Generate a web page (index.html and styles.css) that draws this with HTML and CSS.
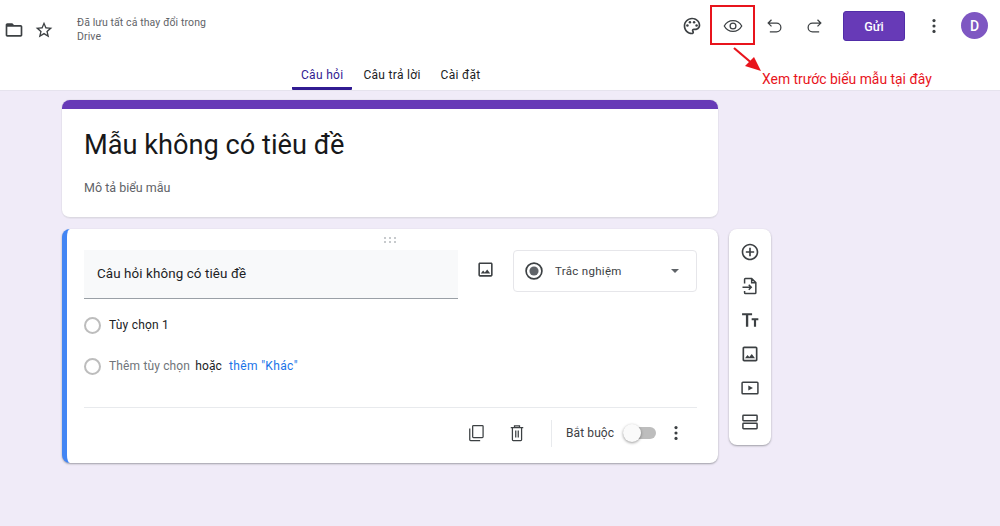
FILE: index.html
```html
<!DOCTYPE html>
<html lang="vi">
<head>
<meta charset="utf-8">
<title>Mẫu không có tiêu đề</title>
<link rel="stylesheet" href="styles.css">
</head>
<body>
<header class="header">
  <div class="topbar">
    <div class="top-left">
      <svg class="icon ic-folder" viewBox="0 0 24 24"><path d="M20 6h-8l-2-2H4c-1.1 0-1.99.9-1.99 2L2 18c0 1.1.9 2 2 2h16c1.1 0 2-.9 2-2V8c0-1.1-.9-2-2-2zm0 12H4V8h16v10z"/></svg>
      <svg class="icon ic-star" viewBox="0 0 24 24"><path d="M22 9.24l-7.19-.62L12 2 9.19 8.63 2 9.24l5.46 4.73L5.82 21 12 17.27 18.18 21l-1.63-7.03L22 9.24zM12 15.4l-3.76 2.27 1-4.28-3.32-2.88 4.38-.38L12 6.1l1.71 4.04 4.38.38-3.32 2.88 1 4.28L12 15.4z"/></svg>
      <div class="saved">Đã lưu tất cả thay đổi trong<br>Drive</div>
    </div>
    <div class="top-right">
      <span class="tool"><svg class="icon" viewBox="0 0 24 24"><path d="M12 22C6.49 22 2 17.51 2 12S6.49 2 12 2s10 4.04 10 9c0 3.31-2.69 6-6 6h-1.77c-.28 0-.5.22-.5.5 0 .12.05.23.13.33.41.47.64 1.06.64 1.67 0 1.38-1.12 2.5-2.5 2.5zm0-18c-4.41 0-8 3.59-8 8s3.59 8 8 8c.28 0 .5-.22.5-.5 0-.16-.08-.28-.14-.35-.41-.46-.63-1.05-.63-1.65 0-1.38 1.12-2.5 2.5-2.5H16c2.21 0 4-1.79 4-4 0-3.86-3.59-7-8-7z"/><circle cx="6.5" cy="11.5" r="1.5"/><circle cx="9.5" cy="7.5" r="1.5"/><circle cx="14.5" cy="7.5" r="1.5"/><circle cx="17.5" cy="11.5" r="1.5"/></svg></span>
      <span class="tool"><svg class="icon line thin" viewBox="0 0 24 24"><path d="M1.500 12C4 7.500 8 5.500 12 5.500s8 2 10.500 6.500c-2.500 4.500-6.500 6.500-10.500 6.500s-8-2-10.500-6.500z"/><circle cx="12" cy="12" r="3.500"/></svg></span>
      <span class="tool"><svg class="icon line thin" viewBox="0 0 24 24"><path d="M9 4.500l-4 4 4 4M5 8.500h10a5 5 0 0 1 0 10.500H7"/></svg></span>
      <span class="tool"><svg class="icon line thin" viewBox="0 0 24 24"><path d="M15 4.500l4 4-4 4M19 8.500H9a5 5 0 0 0 0 10.500h8"/></svg></span>
      <button class="send" type="button">Gửi</button>
      <span class="tool tool-more"><svg class="icon" viewBox="0 0 24 24"><circle cx="12" cy="5.500" r="1.900"/><circle cx="12" cy="12" r="1.900"/><circle cx="12" cy="18.500" r="1.900"/></svg></span>
      <span class="avatar">D</span>
    </div>
  </div>
  <nav class="tabs">
    <a class="tab tab-active">Câu hỏi</a>
    <a class="tab">Câu trả lời</a>
    <a class="tab">Cài đặt</a>
  </nav>
</header>

<main class="canvas">
  <div class="column">
    <section class="card title-card">
      <h1 class="form-title">Mẫu không có tiêu đề</h1>
      <p class="form-desc">Mô tả biểu mẫu</p>
    </section>
    <section class="card question-card">
      <div class="handle"><svg width="14" height="8" viewBox="0 0 14 8"><g fill="#b5b8bc"><circle cx="2" cy="2" r="1"/><circle cx="7" cy="2" r="1"/><circle cx="12" cy="2" r="1"/><circle cx="2" cy="6" r="1"/><circle cx="7" cy="6" r="1"/><circle cx="12" cy="6" r="1"/></g></svg></div>
      <div class="q-row">
        <div class="q-input">Câu hỏi không có tiêu đề</div>
        <svg class="icon ic-img" viewBox="0 0 24 24"><path d="M19 5v14H5V5h14m0-2H5c-1.100 0-2 .9-2 2v14c0 1.100.9 2 2 2h14c1.100 0 2-.9 2-2V5c0-1.100-.9-2-2-2zm-4.860 8.860l-3 3.870L9 13.140 6 17h12l-3.860-5.140z"/></svg>
        <div class="q-type">
          <svg class="ic-radio" viewBox="0 0 24 24"><circle cx="12" cy="12" r="9.500" fill="none" stroke="#3c4043" stroke-width="2"/><circle cx="12" cy="12" r="5.500" fill="#5f6368"/></svg>
          <span class="q-type-label">Trắc nghiệm</span>
          <span class="caret"></span>
        </div>
      </div>
      <div class="option option-first">
        <span class="radio"></span><span class="opt-text">Tùy chọn 1</span>
      </div>
      <div class="option">
        <span class="radio"></span><span class="opt-add">Thêm tùy chọn</span><span class="opt-or">hoặc</span><span class="opt-link">thêm "Khác"</span>
      </div>
      <div class="q-footer">
        <svg class="icon line thin ic-foot" viewBox="0 0 24 24"><rect x="8" y="3" width="12.500" height="14.500" rx="1"/><path d="M4.500 6.500V20a1 1 0 0 0 1 1H17"/></svg>
        <svg class="icon line thin ic-foot ic-trash" viewBox="0 0 24 24"><path d="M4.500 5.500h15M9 5.500V3.500h6v2M6.500 5.500V20a1 1 0 0 0 1 1h9a1 1 0 0 0 1-1V5.500M10.500 9v8.500M13.500 9v8.500"/></svg>
        <span class="v-divider"></span>
        <span class="required">Bắt buộc</span>
        <span class="toggle"><span class="knob"></span></span>
        <svg class="icon ic-more2" viewBox="0 0 24 24"><circle cx="12" cy="5.500" r="1.900"/><circle cx="12" cy="12" r="1.900"/><circle cx="12" cy="18.500" r="1.900"/></svg>
      </div>
    </section>
  </div>
  <aside class="card sidebar">
    <svg class="icon" viewBox="0 0 24 24"><path d="M13 7h-2v4H7v2h4v4h2v-4h4v-2h-4V7zm-1-5C6.480 2 2 6.480 2 12s4.480 10 10 10 10-4.480 10-10S17.520 2 12 2zm0 18c-4.410 0-8-3.590-8-8s3.590-8 8-8 8 3.590 8 8-3.590 8-8 8z"/></svg>
    <svg class="icon line" viewBox="0 0 24 24"><path d="M5.500 9V4a1 1 0 0 1 1-1H14l5 5v12a1 1 0 0 1-1 1H6.500a1 1 0 0 1-1-1v-2M14 3v5h5M3 13.500h10.500M10.500 10.500l3 3-3 3"/></svg>
    <svg class="icon" viewBox="0 0 24 24"><path d="M2.500 4h12v2.400H9.900V20H7.100V6.400H2.500zM14 10h8v2.200h-2.700V20h-2.600v-7.800H14z"/></svg>
    <svg class="icon" viewBox="0 0 24 24"><path d="M19 5v14H5V5h14m0-2H5c-1.100 0-2 .9-2 2v14c0 1.100.9 2 2 2h14c1.100 0 2-.9 2-2V5c0-1.100-.9-2-2-2zm-4.860 8.860l-3 3.870L9 13.140 6 17h12l-3.860-5.140z"/></svg>
    <svg class="icon line" viewBox="0 0 24 24"><rect x="2.500" y="5" width="19" height="14" rx="1"/><path class="solid" d="M10 9l5.500 3-5.500 3z"/></svg>
    <svg class="icon line" viewBox="0 0 24 24"><rect x="3.500" y="4" width="17" height="6.500" rx=".8"/><rect x="3.500" y="13.500" width="17" height="6.500" rx=".8"/></svg>
  </aside>
</main>

<div class="callout-box"></div>
<svg class="callout-arrow" width="50" height="34" viewBox="0 0 50 34"><path d="M2 1 L22 18" stroke="#e8141c" stroke-width="2.200" fill="none"/><path d="M29 24 L13 19 L22 10 Z" fill="#e8141c"/></svg>
<div class="callout-text">Xem trước biểu mẫu tại đây</div>
</body>
</html>
```
FILE: styles.css
```css
* { box-sizing: border-box; }
html, body { margin: 0; padding: 0; }
body {
  width: 1000px;
  height: 526px;
  overflow: hidden;
  background: #f0ebf8;
  font-family: Roboto, "Noto Sans", sans-serif;
  color: #202124;
  position: relative;
}
.icon { width: 20px; height: 20px; fill: #3c4043; flex: none; display: block; }
.icon.line { fill: none; stroke: #3c4043; stroke-width: 1.800; }
.icon.line.thin { stroke-width: 1.500; }
.icon.line .solid { fill: #3c4043; stroke: none; }

.header { height: 91px; background: #fff; border-bottom: 1px solid #e6e3ee; }
.topbar { height: 60px; display: flex; justify-content: space-between; }
.top-left { display: flex; align-items: center; padding: 0 0 0 4px; height: 60px; }
.ic-folder { width: 20px; height: 20px; }
.ic-star { width: 20px; height: 20px; margin-left: 10px; }
.saved {
  margin-left: 23px;
  font-size: 10.500px;
  line-height: 14px;
  letter-spacing: .1px;
  color: #5f6368;
}
.top-right { display: flex; align-items: flex-start; padding: 11px 12px 0 0; }
.tool { width: 41px; height: 30px; display: flex; align-items: center; justify-content: center; }
.tool-more { margin-left: 8px; width: 41px; }
.send {
  margin-left: 8px;
  width: 62px;
  height: 30px;
  border: 1px solid #512da8;
  border-radius: 3px;
  background: #673ab7;
  color: #fff;
  font: 500 12.500px Roboto, sans-serif;
  padding: 0;
}
.avatar {
  width: 27px;
  height: 27px;
  margin: 1px 0 0 7px;
  border-radius: 50%;
  background: #7e57c2;
  color: #fff;
  font-size: 14px;
  font-weight: 500;
  display: flex;
  align-items: center;
  justify-content: center;
}
.tabs { height: 30px; display: flex; gap: 2px; padding-left: 292px; }
.tab {
  height: 30px;
  padding: 0 9px 1px;
  font-size: 12px;
  letter-spacing: .3px;
  line-height: 31px;
  color: #202124;
}
.tab-active { color: #311b92; border-bottom: 3px solid #311b92; border-radius: 0 0 1px 1px; }

.canvas { display: flex; align-items: flex-start; gap: 11px; padding: 9px 0 0 62px; }
.column { width: 656px; display: flex; flex-direction: column; gap: 11px; }
.card { background: #fff; border-radius: 8px; }
.title-card {
  height: 118px;
  padding: 9px 21px 0 22px;
  border-top: 9px solid #673ab7;
  border-bottom: 1px solid #dcd9e2;
  box-shadow: 0 0 0 1px #e6e2ee;
}
.form-title {
  margin: 11px 0 0;
  font-size: 27.200px;
  font-weight: 400;
  line-height: 32px;
  color: #17181a;
}
.form-desc {
  margin: 19px 0 0;
  font-size: 12.500px;
  line-height: 16px;
  color: #5f6368;
}
.question-card {
  height: 234px;
  padding: 0 21px 0 17px;
  border-left: 5px solid #4285f4;
  box-shadow: 0 1px 2px rgba(60, 64, 67, .45);
}
.handle { height: 21px; display: flex; justify-content: center; padding: 7px 0 0 0; margin-right: 2px; }
.q-row { display: flex; align-items: flex-start; }
.q-input {
  width: 374px;
  height: 49px;
  padding: 0 13px;
  background: #f8f9fa;
  border-bottom: 1px solid #9aa0a6;
  font-size: 13.400px;
  line-height: 48px;
  letter-spacing: .1px;
  color: #202124;
}
.ic-img { margin: 10px 0 0 18px; width: 19px; height: 19px; }
.q-type {
  margin-left: 18px;
  width: 184px;
  height: 42px;
  border: 1px solid #e6e6ea;
  border-radius: 4px;
  display: flex;
  align-items: center;
  padding: 0 17px 0 10px;
}
.ic-radio { width: 20px; height: 20px; flex: none; }
.q-type-label { margin-left: 11px; font-size: 11.500px; letter-spacing: .3px; color: #3c4043; flex: 1; }
.caret {
  width: 0;
  height: 0;
  border-left: 4px solid transparent;
  border-right: 4px solid transparent;
  border-top: 4px solid #5f6368;
}
.option { display: flex; align-items: center; height: 20px; margin-top: 21px; font-size: 12px; letter-spacing: .15px; }
.option-first { margin-top: 16px; }
.radio { width: 17px; height: 17px; border: 2px solid #bdbdbd; border-radius: 50%; flex: none; }
.opt-text { margin-left: 8px; color: #202124; letter-spacing: .2px; }
.opt-add { margin-left: 8px; color: #70757a; }
.opt-or { margin-left: 5px; color: #202124; }
.opt-link { margin-left: 7px; color: #1a73e8; letter-spacing: .35px; }
.q-footer {
  margin-top: 31px;
  height: 55px;
  border-top: 1px solid #e8eaed;
  display: flex;
  align-items: center;
  padding-bottom: 4px;
}
.ic-foot { margin-left: 382px; width: 20px; height: 20px; }
.ic-trash { margin-left: 21px; }
.v-divider { margin-left: 24px; width: 1px; height: 27px; background: #e8eaed; }
.required { margin-left: 14px; font-size: 12px; letter-spacing: .1px; color: #3c4043; }
.toggle {
  margin-left: 9px;
  width: 33px;
  height: 12px;
  border-radius: 6px;
  background: #bdbdbd;
  position: relative;
  flex: none;
}
.knob {
  position: absolute;
  left: 0;
  top: -3px;
  width: 18px;
  height: 18px;
  border-radius: 50%;
  background: #fafafa;
  box-shadow: 0 1px 3px rgba(0, 0, 0, .4);
}
.ic-more2 { margin-left: 10px; width: 20px; height: 20px; }
.sidebar {
  width: 42px;
  height: 216px;
  margin-top: 129px;
  padding: 13px 0 0;
  display: flex;
  flex-direction: column;
  align-items: center;
  gap: 14px;
  box-shadow: 0 1px 2px rgba(60, 64, 67, .45);
}

.callout-box {
  position: absolute;
  left: 710px;
  top: 5px;
  width: 45px;
  height: 40px;
  border: 2px solid #e8141c;
}
.callout-arrow { position: absolute; left: 732px; top: 47px; }
.callout-text {
  position: absolute;
  left: 762px;
  top: 71px;
  font-size: 13.900px;
  line-height: 16px;
  color: #e8141c;
  white-space: nowrap;
}
```
